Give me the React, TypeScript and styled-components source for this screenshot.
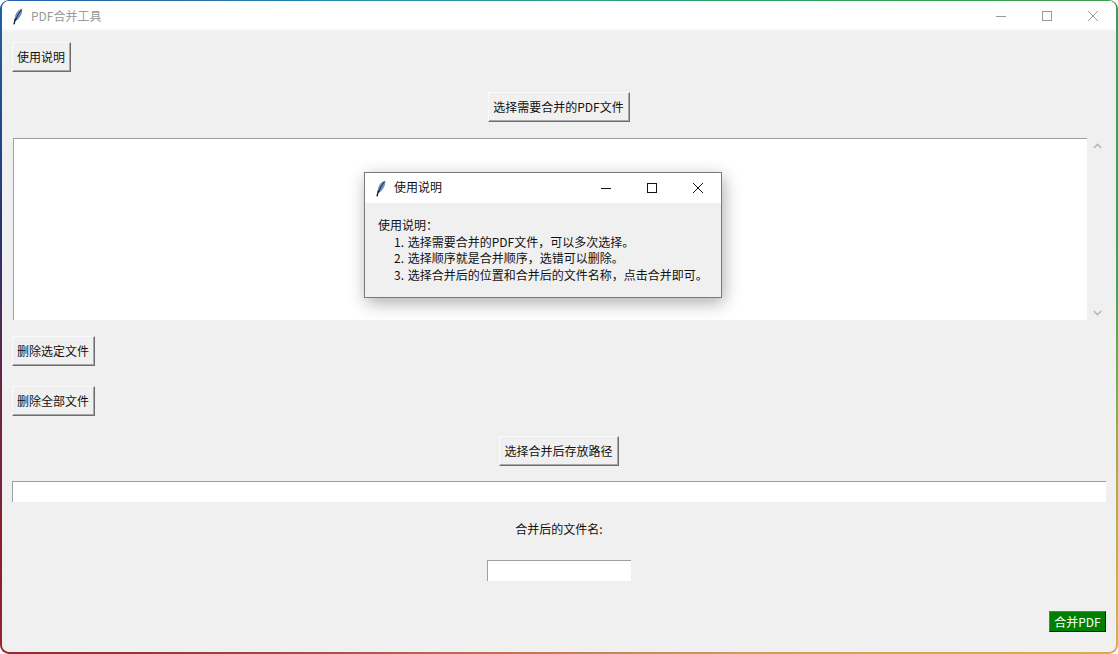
import React from "react";
import styled, { createGlobalStyle } from "styled-components";

const Global = createGlobalStyle`
  html, body { margin: 0; padding: 0; background: #fff; }
  body { width: 1118px; height: 654px; overflow: hidden; font-family: "Noto Sans CJK SC", "Liberation Sans", sans-serif; font-size: 12px; color: #111; }
`;

const Frame = styled.div`
  position: relative;
  box-sizing: border-box;
  width: 1118px;
  height: 654px;
  padding: 1px 2px 2px 2px;
  border-radius: 9px;
  background: conic-gradient(from 0deg at 50% 50%, #2f9e8a 0deg, #37a04f 50deg, #3fa34f 85deg, #8fae4c 100deg, #d8b04a 118deg, #cf9a5a 150deg, #c2654f 200deg, #8e1f2c 245deg, #6b2540 262deg, #27346f 280deg, #1f5fa8 300deg, #2a8fb0 330deg, #2f9e8a 360deg);
`;

const Window = styled.div`
  box-sizing: border-box;
  width: 100%;
  height: 100%;
  border-radius: 7px;
  overflow: hidden;
  background: #f0f0f0;
  display: flex;
  flex-direction: column;
`;

const TitleBar = styled.header`
  flex: none;
  height: 31px;
  background: linear-gradient(#fff 0 27px, #f0f0f0 100%);
  display: flex;
  align-items: center;
  padding-left: 11px;
  color: #999;
`;

const TitleText = styled.span`
  margin-left: 8px;
  margin-top: -2px;
  line-height: 16px;
`;

const WinControls = styled.div`
  margin-left: auto;
  margin-top: -1px;
  display: flex;
  align-items: center;
`;

const WinBtn = styled.span`
  width: 46px;
  height: 26px;
  display: flex;
  align-items: center;
  justify-content: center;
`;

const Body = styled.main`
  flex: 1;
  padding: 10px 10px 0 10px;
  display: flex;
  flex-direction: column;
`;

const RaisedButton = styled.button<{ $top?: number; $center?: boolean }>`
  box-sizing: border-box;
  height: 30px;
  margin: ${(p) => p.$top ?? 0}px 0 0 0;
  padding: 0 5px 2px 4px;
  align-self: ${(p) => (p.$center ? "center" : "flex-start")};
  font: inherit;
  color: #111;
  background: #f0f0f0;
  border: 1px solid;
  border-color: #fafafa #6d6d6d #6d6d6d #fafafa;
  box-shadow: inset -1px -1px 0 #a8a8a8;
  white-space: nowrap;
`;

const ListRow = styled.div`
  margin-top: 16px;
  display: flex;
  height: 182px;
`;

const ListBox = styled.div`
  flex: none;
  width: 1074px;
  margin-left: 1px;
  box-sizing: border-box;
  background: #fff;
  border-top: 1px solid #a0a0a0;
  border-left: 1px solid #a0a0a0;
`;

const ScrollBar = styled.div`
  flex: 1;
  display: flex;
  flex-direction: column;
  justify-content: space-between;
  align-items: flex-start;
  padding: 5px 0 4px 6px;
`;

const Entry = styled.div<{ $width?: string; $top: number; $center?: boolean }>`
  box-sizing: border-box;
  flex: none;
  height: 21px;
  width: ${(p) => p.$width ?? "100%"};
  margin-top: ${(p) => p.$top}px;
  align-self: ${(p) => (p.$center ? "center" : "stretch")};
  background: #fff;
  border-top: 1px solid #a0a0a0;
  border-left: 1px solid #a0a0a0;
`;

const Caption = styled.div`
  margin-top: 18px;
  align-self: center;
  line-height: 17px;
`;

const GoButton = styled.button`
  box-sizing: border-box;
  align-self: flex-end;
  margin-top: 30px;
  width: 57px;
  height: 21px;
  padding: 0;
  font: inherit;
  line-height: 17px;
  color: #fff;
  background: #008000;
  border: 1px solid;
  border-color: #2f9a2f #0a2a0a #0a2a0a #2f9a2f;
`;

const Dialog = styled.section`
  position: absolute;
  left: 364px;
  top: 172px;
  width: 358px;
  height: 126px;
  box-sizing: border-box;
  border: 1px solid #7a7a7a;
  background: #f0f0f0;
  box-shadow: 2px 5px 16px rgba(0, 0, 0, 0.32);
  display: flex;
  flex-direction: column;
`;

const DialogBar = styled.header`
  flex: none;
  height: 30px;
  background: #fff;
  display: flex;
  align-items: center;
  padding-left: 11px;
`;

const DialogTitle = styled.span`
  margin-left: 8px;
  margin-top: -2px;
  line-height: 16px;
  color: #111;
`;

const DialogControls = styled.div`
  margin-left: auto;
  display: flex;
  align-items: center;
`;

const DialogBtn = styled.span`
  width: 46px;
  height: 30px;
  display: flex;
  align-items: center;
  justify-content: center;
`;

const DialogText = styled.div`
  padding: 14px 0 0 13px;
  line-height: 16.6px;
`;

const Step = styled.div`
  padding-left: 16px;
  white-space: nowrap;
  word-spacing: 1px;
`;

const Feather = () => (
  <svg width="10" height="17" viewBox="0 0 10 17" aria-hidden="true">
    <path d="M9.2 0.6C5.6 1.6 2.6 5 1.9 9.2c-.3 1.5-.2 2.7.2 3.6C5 12 8.2 8.4 9 4.2c.3-1.3.4-2.6.2-3.6z" fill="#6f8fbc" />
    <path d="M8.4 2C6 4.5 3.8 8.5 2.7 12.6" stroke="#12203a" strokeWidth="1" fill="none" />
    <path d="M2.4 10.5C1.9 12.6 1.5 14.4 1 16.4" stroke="#050a14" strokeWidth="1.3" fill="none" />
  </svg>
);

const Min = ({ c }: { c: string }) => (
  <svg width="10" height="10" viewBox="0 0 10 10"><path d="M0 5.5h10" stroke={c} strokeWidth="1" /></svg>
);
const Max = ({ c }: { c: string }) => (
  <svg width="10" height="10" viewBox="0 0 10 10"><rect x=".5" y=".5" width="9" height="9" fill="none" stroke={c} /></svg>
);
const Close = ({ c }: { c: string }) => (
  <svg width="10" height="10" viewBox="0 0 10 10"><path d="M0 0l10 10M10 0L0 10" stroke={c} strokeWidth="1" fill="none" /></svg>
);
const Chevron = ({ up }: { up?: boolean }) => (
  <svg width="9" height="6" viewBox="0 0 9 6">
    <path d={up ? "M.8 5L4.5 1.4 8.2 5" : "M.8 1L4.5 4.6 8.2 1"} stroke="#b8b8b8" strokeWidth="1.6" fill="none" />
  </svg>
);

export default function App() {
  return (
    <>
      <Global />
      <Frame>
        <Window>
          <TitleBar>
            <Feather />
            <TitleText>PDF合并工具</TitleText>
            <WinControls>
              <WinBtn><Min c="#999" /></WinBtn>
              <WinBtn><Max c="#999" /></WinBtn>
              <WinBtn><Close c="#999" /></WinBtn>
            </WinControls>
          </TitleBar>
          <Body>
            <RaisedButton>使用说明</RaisedButton>
            <RaisedButton $center $top={20}>选择需要合并的PDF文件</RaisedButton>
            <ListRow>
              <ListBox />
              <ScrollBar>
                <Chevron up />
                <Chevron />
              </ScrollBar>
            </ListRow>
            <RaisedButton $top={16}>删除选定文件</RaisedButton>
            <RaisedButton $top={20}>删除全部文件</RaisedButton>
            <RaisedButton $center $top={20}>选择合并后存放路径</RaisedButton>
            <Entry $top={15} />
            <Caption>合并后的文件名:</Caption>
            <Entry $center $width="144px" $top={23} />
            <GoButton>合并PDF</GoButton>
          </Body>
        </Window>
        <Dialog>
          <DialogBar>
            <Feather />
            <DialogTitle>使用说明</DialogTitle>
            <DialogControls>
              <DialogBtn><Min c="#111" /></DialogBtn>
              <DialogBtn><Max c="#111" /></DialogBtn>
              <DialogBtn><Close c="#111" /></DialogBtn>
            </DialogControls>
          </DialogBar>
          <DialogText>
            <div>使用说明：</div>
            <Step>1. 选择需要合并的PDF文件，可以多次选择。</Step>
            <Step>2. 选择顺序就是合并顺序，选错可以删除。</Step>
            <Step>3. 选择合并后的位置和合并后的文件名称，点击合并即可。</Step>
          </DialogText>
        </Dialog>
      </Frame>
    </>
  );
}
